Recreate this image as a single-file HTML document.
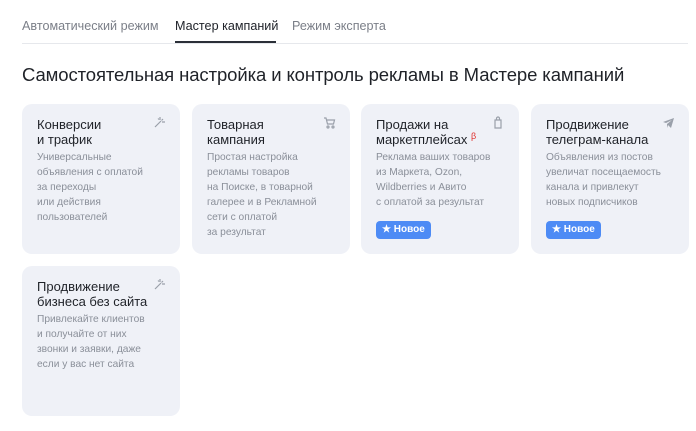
<!DOCTYPE html>
<html><head><meta charset="utf-8"><style>
body{margin:0;width:696px;height:431px;background:#fff;font-family:"Liberation Sans",sans-serif;position:relative;overflow:hidden}
.tabs{position:absolute;left:22px;top:0;width:666px;height:43px;border-bottom:1px solid #e6e8ec}
.tab{position:absolute;top:19px;font-size:12.6px;color:#7b7f88;white-space:nowrap}
.tab.a{color:#21242b}
.ul{position:absolute;left:153px;top:41px;width:101px;height:2px;background:#2b2f38}
h1{position:absolute;left:22px;top:64px;margin:0;font-size:18.5px;font-weight:normal;color:#1f2228;white-space:nowrap;letter-spacing:-0.1px}
.card{position:absolute;width:158px;height:150px;background:#eff1f7;border-radius:10px}
.t{position:absolute;left:15px;top:13px;font-size:13px;line-height:15px;color:#1f2228;white-space:nowrap}
.d{position:absolute;left:15px;top:46px;font-size:10.2px;line-height:15px;color:#8a8f99;white-space:nowrap}
.ic{position:absolute;right:14px;top:12px}
.b{position:absolute;left:15px;top:117px;height:18px;padding:0 6px;background:#4d8bf5;color:#fff;border-radius:4px;font-size:10px;font-weight:bold;line-height:18px}
.beta{color:#e0312e;font-size:9px;position:relative;top:-5px}
</style></head><body>
<div class="tabs">
<span class="tab" style="left:0">Автоматический режим</span>
<span class="tab a" style="left:153px">Мастер кампаний</span>
<span class="tab" style="left:270px">Режим эксперта</span>
<div class="ul"></div>
</div>
<h1>Самостоятельная настройка и контроль рекламы в Мастере кампаний</h1>

<div class="card" style="left:22px;top:104px">
<div class="t">Конверсии<br>и трафик</div>
<svg class="ic" width="13" height="13" viewBox="0 0 13 13" fill="none" stroke="#9aa0aa" stroke-width="1.2"><path d="M2 11l6-6M7 1v3M10 3l-1.5 1.5M12 6H9M5 2.5l1 1"/></svg>
<div class="d">Универсальные<br>объявления с оплатой<br>за переходы<br>или действия<br>пользователей</div>
</div>
<div class="card" style="left:192px;top:104px">
<div class="t">Товарная<br>кампания</div>
<svg class="ic" width="13" height="13" viewBox="0 0 13 13" fill="none" stroke="#9aa0aa" stroke-width="1.2"><path d="M1 2h2l1.5 6h6l1-4H4"/><circle cx="5" cy="11" r="1"/><circle cx="10" cy="11" r="1"/></svg>
<div class="d">Простая настройка<br>рекламы товаров<br>на Поиске, в товарной<br>галерее и в Рекламной<br>сети с оплатой<br>за результат</div>
</div>
<div class="card" style="left:361px;top:104px">
<div class="t">Продажи на<br>маркетплейсах <span class="beta">β</span></div>
<svg class="ic" width="13" height="13" viewBox="0 0 13 13" fill="none" stroke="#9aa0aa" stroke-width="1.2"><path d="M3 4h6v8H3zM4.5 4V2.5a1.5 1.5 0 013 0V4"/></svg>
<div class="d">Реклама ваших товаров<br>из Маркета, Ozon,<br>Wildberries и Авито<br>с оплатой за результат</div>
<div class="b">★ Новое</div>
</div>
<div class="card" style="left:531px;top:104px">
<div class="t">Продвижение<br>телеграм-канала</div>
<svg class="ic" width="13" height="13" viewBox="0 0 13 13"><path d="M1 6l11-4-3 10-3-3-1 3V8l5-4-6 3z" fill="#9aa0aa"/></svg>
<div class="d">Объявления из постов<br>увеличат посещаемость<br>канала и привлекут<br>новых подписчиков</div>
<div class="b">★ Новое</div>
</div>
<div class="card" style="left:22px;top:266px">
<div class="t">Продвижение<br>бизнеса без сайта</div>
<svg class="ic" width="13" height="13" viewBox="0 0 13 13" fill="none" stroke="#9aa0aa" stroke-width="1.2"><path d="M2 11l6-6M7 1v3M10 3l-1.5 1.5M12 6H9M5 2.5l1 1"/></svg>
<div class="d">Привлекайте клиентов<br>и получайте от них<br>звонки и заявки, даже<br>если у вас нет сайта</div>
</div>
</body></html>
